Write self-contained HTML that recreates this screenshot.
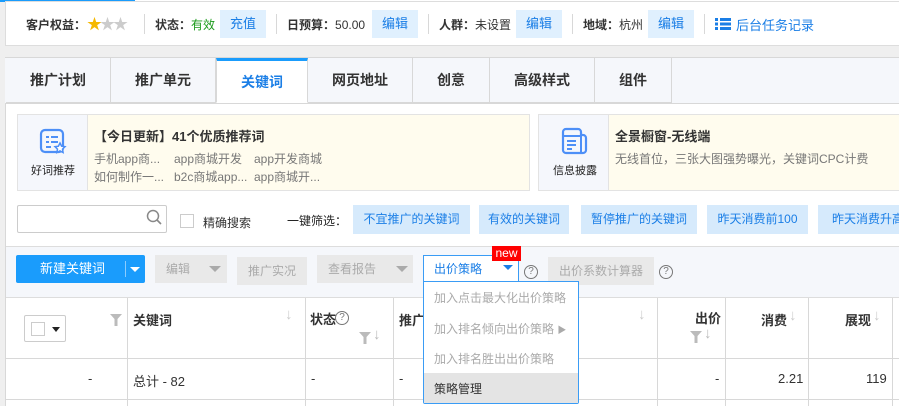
<!DOCTYPE html>
<html><head><meta charset="utf-8"><style>
*{margin:0;padding:0;box-sizing:border-box}
body{width:899px;height:406px;overflow:hidden;background:#efefef;font-family:"Liberation Sans","Noto Sans CJK SC",sans-serif;font-size:12px;color:#333;position:relative}
.a{position:absolute}
.b{font-weight:bold}
.lb{background:#e0f0fe;color:#1a7ee6;text-align:center}
.tab{position:absolute;top:58px;height:45px;line-height:45px;text-align:center;font-size:14px;font-weight:bold;color:#333;border-right:1px solid #d8d8d8;background:#f5f7fb;border-bottom:1px solid #d8d8d8}
.fb{position:absolute;top:205px;height:29px;line-height:29px;background:#d6eafc;color:#1a7ee6;text-align:center;font-size:12px}
.gb{position:absolute;background:#e9e9e9;color:#aaa;text-align:center;font-size:12px}
.vl{position:absolute;width:1px;background:#d8d8d8}
.tt{font-size:13px}
.ar{position:absolute;color:#ccc;font-size:15px}
</style></head><body>
<div class="a" style="left:5px;top:0;width:894px;height:406px;background:#fff;border-left:1px solid #d8d8d8"></div>
<div class="a" style="left:0;top:0;width:135px;height:2px;background:#1a9cfc"></div>
<div class="a" style="left:5px;top:1px;width:894px;height:45px;background:#fff;border:1px solid #ddd;border-right:none"></div>
<div class="a" style="left:5px;top:46px;width:894px;height:11px;background:#efefef"></div>
<div class="a b" style="left:26px;top:16px">客户权益：</div>
<div class="a" style="left:87px;top:13px;font-size:15px;letter-spacing:-2px"><span style="color:#f5b800">★</span><span style="color:#ccc">★★</span></div>
<div class="vl" style="left:144px;top:14px;height:20px"></div>
<div class="a b" style="left:155px;top:16px">状态：<span style="color:#1a9a1a;font-weight:normal">有效</span></div>
<div class="a lb" style="left:220px;top:10px;width:46px;height:28px;line-height:28px;font-size:13px">充值</div>
<div class="vl" style="left:276px;top:14px;height:20px"></div>
<div class="a" style="left:287px;top:16px"><b>日预算：</b>50.00</div>
<div class="a lb" style="left:372px;top:10px;width:46px;height:28px;line-height:28px;font-size:13px">编辑</div>
<div class="vl" style="left:428px;top:14px;height:20px"></div>
<div class="a" style="left:439px;top:16px"><b>人群：</b>未设置</div>
<div class="a lb" style="left:516px;top:10px;width:46px;height:28px;line-height:28px;font-size:13px">编辑</div>
<div class="vl" style="left:572px;top:14px;height:20px"></div>
<div class="a" style="left:583px;top:16px"><b>地域：</b>杭州</div>
<div class="a lb" style="left:648px;top:10px;width:46px;height:28px;line-height:28px;font-size:13px">编辑</div>
<div class="vl" style="left:704px;top:14px;height:20px"></div>
<svg class="a" style="left:715px;top:18px" width="16" height="12"><g fill="#1a7ee6"><rect x="0" y="0" width="3" height="3"/><rect x="5" y="0" width="11" height="3"/><rect x="0" y="4.5" width="3" height="3"/><rect x="5" y="4.5" width="11" height="3"/><rect x="0" y="9" width="3" height="3"/><rect x="5" y="9" width="11" height="3"/></g></svg>
<div class="a" style="left:736px;top:15px;color:#1a7ee6;font-size:13px">后台任务记录</div>
<div class="a" style="left:5px;top:57px;width:894px;height:47px;background:#f5f7fb;border-top:1px solid #d8d8d8;border-bottom:1px solid #d8d8d8"></div>
<div class="tab" style="left:6px;width:105px">推广计划</div>
<div class="tab" style="left:111px;width:105px">推广单元</div>
<div class="tab" style="left:216px;width:92px;background:#fff;color:#1a7ee6;border-top:3px solid #1a9cfc;top:58px;line-height:42px;border-bottom:1px solid #fff;border-left:1px solid #d8d8d8">关键词</div>
<div class="tab" style="left:308px;width:105px">网页地址</div>
<div class="tab" style="left:413px;width:77px">创意</div>
<div class="tab" style="left:490px;width:105px">高级样式</div>
<div class="tab" style="left:595px;width:77px">组件</div>
<div class="a" style="left:17px;top:114px;width:513px;height:77px;background:#fffcee;border:1px solid #e3e3e3"></div>
<div class="a" style="left:18px;top:115px;width:70px;height:75px;background:#f5f7fc;border-right:1px solid #e3e3e3"></div>
<svg class="a" style="left:39px;top:128px" width="28" height="28" viewBox="0 0 28 28"><rect x="2" y="2" width="22" height="22" rx="4" fill="none" stroke="#4d8ff7" stroke-width="2.2"/><g stroke="#4d8ff7" stroke-width="2"><line x1="7" y1="9" x2="10" y2="9"/><line x1="12" y1="9" x2="19" y2="9"/><line x1="7" y1="14" x2="10" y2="14"/><line x1="12" y1="14" x2="19" y2="14"/><line x1="7" y1="19" x2="12" y2="19"/></g><path d="M21 15l1.6 3.2 3.4.5-2.5 2.4.6 3.4-3.1-1.6-3.1 1.6.6-3.4-2.5-2.4 3.4-.5z" fill="#fff" stroke="#4d8ff7" stroke-width="1.5"/></svg>
<div class="a" style="left:31px;top:162px;font-size:11px;color:#222">好词推荐</div>
<div class="a b tt" style="left:94px;top:126px">【今日更新】41个优质推荐词</div>
<div class="a" style="left:94px;top:150px;color:#777">手机app商...</div>
<div class="a" style="left:174px;top:150px;color:#777">app商城开发</div>
<div class="a" style="left:254px;top:150px;color:#777">app开发商城</div>
<div class="a" style="left:94px;top:168px;color:#777">如何制作一...</div>
<div class="a" style="left:174px;top:168px;color:#777">b2c商城app...</div>
<div class="a" style="left:254px;top:168px;color:#777">app商城开...</div>
<div class="a" style="left:538px;top:114px;width:361px;height:77px;background:#fffcee;border:1px solid #e3e3e3;border-right:none"></div>
<div class="a" style="left:539px;top:115px;width:70px;height:75px;background:#f5f7fc;border-right:1px solid #e3e3e3"></div>
<svg class="a" style="left:560px;top:127px" width="28" height="28" viewBox="0 0 28 28"><path d="M3 5a3 3 0 0 1 3-3h12a3 3 0 0 1 3 3v3h2a3 3 0 0 1 3 3v12a3 3 0 0 1-3 3H6a3 3 0 0 1-3-3z" fill="none" stroke="#4d8ff7" stroke-width="2.2"/><g stroke="#4d8ff7" stroke-width="2"><line x1="3" y1="9" x2="21" y2="9"/><line x1="21" y1="9" x2="21" y2="25"/><line x1="7" y1="14" x2="16" y2="14"/><line x1="7" y1="18" x2="16" y2="18"/><line x1="7" y1="22" x2="12" y2="22"/></g></svg>
<div class="a" style="left:553px;top:162px;font-size:11px;color:#222">信息披露</div>
<div class="a b tt" style="left:615px;top:126px">全景橱窗-无线端</div>
<div class="a" style="left:615px;top:150px;color:#777">无线首位，三张大图强势曝光，关键词CPC计费</div>
<div class="a" style="left:17px;top:205px;width:150px;height:28px;border:1px solid #ccc;border-radius:2px"></div>
<svg class="a" style="left:145px;top:208px" width="18" height="18"><circle cx="8" cy="8" r="5.5" fill="none" stroke="#888" stroke-width="1.5"/><line x1="12" y1="12" x2="16" y2="16" stroke="#888" stroke-width="1.6"/></svg>
<div class="a" style="left:180px;top:214px;width:14px;height:14px;border:1px solid #ccc"></div>
<div class="a" style="left:203px;top:214px">精确搜索</div>
<div class="a" style="left:287px;top:212px;color:#222">一键筛选：</div>
<div class="fb" style="left:353px;width:117px">不宜推广的关键词</div>
<div class="fb" style="left:479px;width:90px">有效的关键词</div>
<div class="fb" style="left:581px;width:116px">暂停推广的关键词</div>
<div class="fb" style="left:707px;width:101px">昨天消费前100</div>
<div class="fb" style="left:818px;width:100px">昨天消费升高</div>
<div class="a" style="left:6px;top:246px;width:893px;height:52px;background:#f5f7fb;border-top:1px solid #ddd;border-bottom:1px solid #ddd"></div>
<div class="a" style="left:16px;top:255px;width:129px;height:28px;background:#1a9cfc;border-radius:2px;color:#fff;font-size:13px;line-height:28px"><span style="position:absolute;left:24px">新建关键词</span><span style="position:absolute;left:109px;top:6px;width:1px;height:16px;background:#8cccfd"></span><span style="position:absolute;left:114px;top:12px;border:5px solid transparent;border-top:5px solid #fff"></span></div>
<div class="gb" style="left:155px;top:255px;width:72px;height:28px;line-height:28px"><span style="position:absolute;left:11px">编辑</span><span style="position:absolute;left:54px;top:11px;border:6px solid transparent;border-top:6px solid #aaa"></span></div>
<div class="gb" style="left:237px;top:257px;width:70px;height:28px;line-height:28px">推广实况</div>
<div class="gb" style="left:317px;top:255px;width:96px;height:28px;line-height:28px"><span style="position:absolute;left:11px">查看报告</span><span style="position:absolute;left:79px;top:11px;border:6px solid transparent;border-top:6px solid #aaa"></span></div>
<div class="a" style="left:423px;top:255px;width:96px;height:28px;background:#fff;border:1px solid #3a9cf5;border-bottom:none;color:#1a7ee6;font-size:12px;line-height:27px"><span style="position:absolute;left:10px">出价策略</span><span style="position:absolute;left:79px;top:9px;border:5px solid transparent;border-top:5px solid #1a7ee6"></span></div>
<div class="a" style="left:492px;top:246px;width:29px;height:15px;background:#f00;color:#fff;font-size:12px;line-height:15px;text-align:center">new</div>
<div class="a" style="left:524px;top:265px;width:14px;height:14px;border:1.5px solid #777;border-radius:50%;font-size:10px;line-height:11px;text-align:center;color:#777">?</div>
<div class="gb" style="left:548px;top:257px;width:106px;height:28px;line-height:28px">出价系数计算器</div>
<div class="a" style="left:659px;top:265px;width:14px;height:14px;border:1.5px solid #777;border-radius:50%;font-size:10px;line-height:11px;text-align:center;color:#777">?</div>
<div class="a" style="left:6px;top:358px;width:893px;height:1px;background:#d8d8d8"></div>
<div class="a" style="left:6px;top:399px;width:893px;height:1px;background:#d8d8d8"></div>
<div class="vl" style="left:127px;top:298px;height:108px"></div>
<div class="vl" style="left:305px;top:298px;height:108px"></div>
<div class="vl" style="left:393px;top:298px;height:108px"></div>
<div class="vl" style="left:657px;top:298px;height:108px"></div>
<div class="vl" style="left:725px;top:298px;height:108px"></div>
<div class="vl" style="left:808px;top:298px;height:108px"></div>
<div class="vl" style="left:892px;top:298px;height:108px"></div>
<div class="a" style="left:24px;top:315px;width:42px;height:27px;border:1px solid #ccc;border-radius:2px;background:#fff"></div>
<div class="a" style="left:31px;top:322px;width:14px;height:14px;border:1px solid #ccc"></div>
<div class="a" style="left:52px;top:327px;border:4px solid transparent;border-top:5px solid #222"></div>
<svg class="a" style="left:110px;top:314px" width="12" height="12"><path d="M0 0h12L7.5 5v7H4.5V5z" fill="#bbb"/></svg>
<div class="a b tt" style="left:133px;top:310px">关键词</div>
<div class="ar" style="left:285px;top:306px">↓</div>
<div class="a b tt" style="left:310px;top:309px">状态</div>
<div class="a" style="left:335px;top:311px;width:14px;height:14px;border:1.5px solid #777;border-radius:50%;font-size:10px;line-height:11px;text-align:center;color:#777">?</div>
<svg class="a" style="left:359px;top:332px" width="12" height="12"><path d="M0 0h12L7.5 5v7H4.5V5z" fill="#bbb"/></svg>
<div class="ar" style="left:373px;top:326px;color:#bbb">↓</div>
<div class="a b tt" style="left:399px;top:310px">推广</div>
<div class="ar" style="left:638px;top:306px">↓</div>
<div class="a b tt" style="left:695px;top:308px">出价</div>
<svg class="a" style="left:690px;top:331px" width="12" height="12"><path d="M0 0h12L7.5 5v7H4.5V5z" fill="#bbb"/></svg>
<div class="ar" style="left:704px;top:325px;color:#bbb">↓</div>
<div class="a b tt" style="left:761px;top:310px">消费</div>
<div class="ar" style="left:789px;top:307px">↓</div>
<div class="a b tt" style="left:845px;top:310px">展现</div>
<div class="ar" style="left:873px;top:307px">↓</div>
<div class="a tt" style="left:88px;top:371px">-</div>
<div class="a tt" style="left:133px;top:371px">总计 - 82</div>
<div class="a tt" style="left:311px;top:371px">-</div>
<div class="a tt" style="left:399px;top:371px">-</div>
<div class="a tt" style="left:715px;top:371px">-</div>
<div class="a tt" style="left:778px;top:371px">2.21</div>
<div class="a tt" style="left:866px;top:371px">119</div>
<div class="a" style="left:423px;top:281px;width:156px;height:123px;background:#fff;border:1px solid #3a9cf5;border-radius:0 0 2px 2px"></div>
<div class="a" style="left:424px;top:373px;width:154px;height:30px;background:#e4e4e4"></div>
<div class="a" style="left:434px;top:289px;color:#aaa">加入点击最大化出价策略</div>
<div class="a" style="left:434px;top:320px;color:#aaa">加入排名倾向出价策略 <span style="font-size:9px">▶</span></div>
<div class="a" style="left:434px;top:350px;color:#aaa">加入排名胜出出价策略</div>
<div class="a" style="left:434px;top:380px;color:#333">策略管理</div>
</body></html>
